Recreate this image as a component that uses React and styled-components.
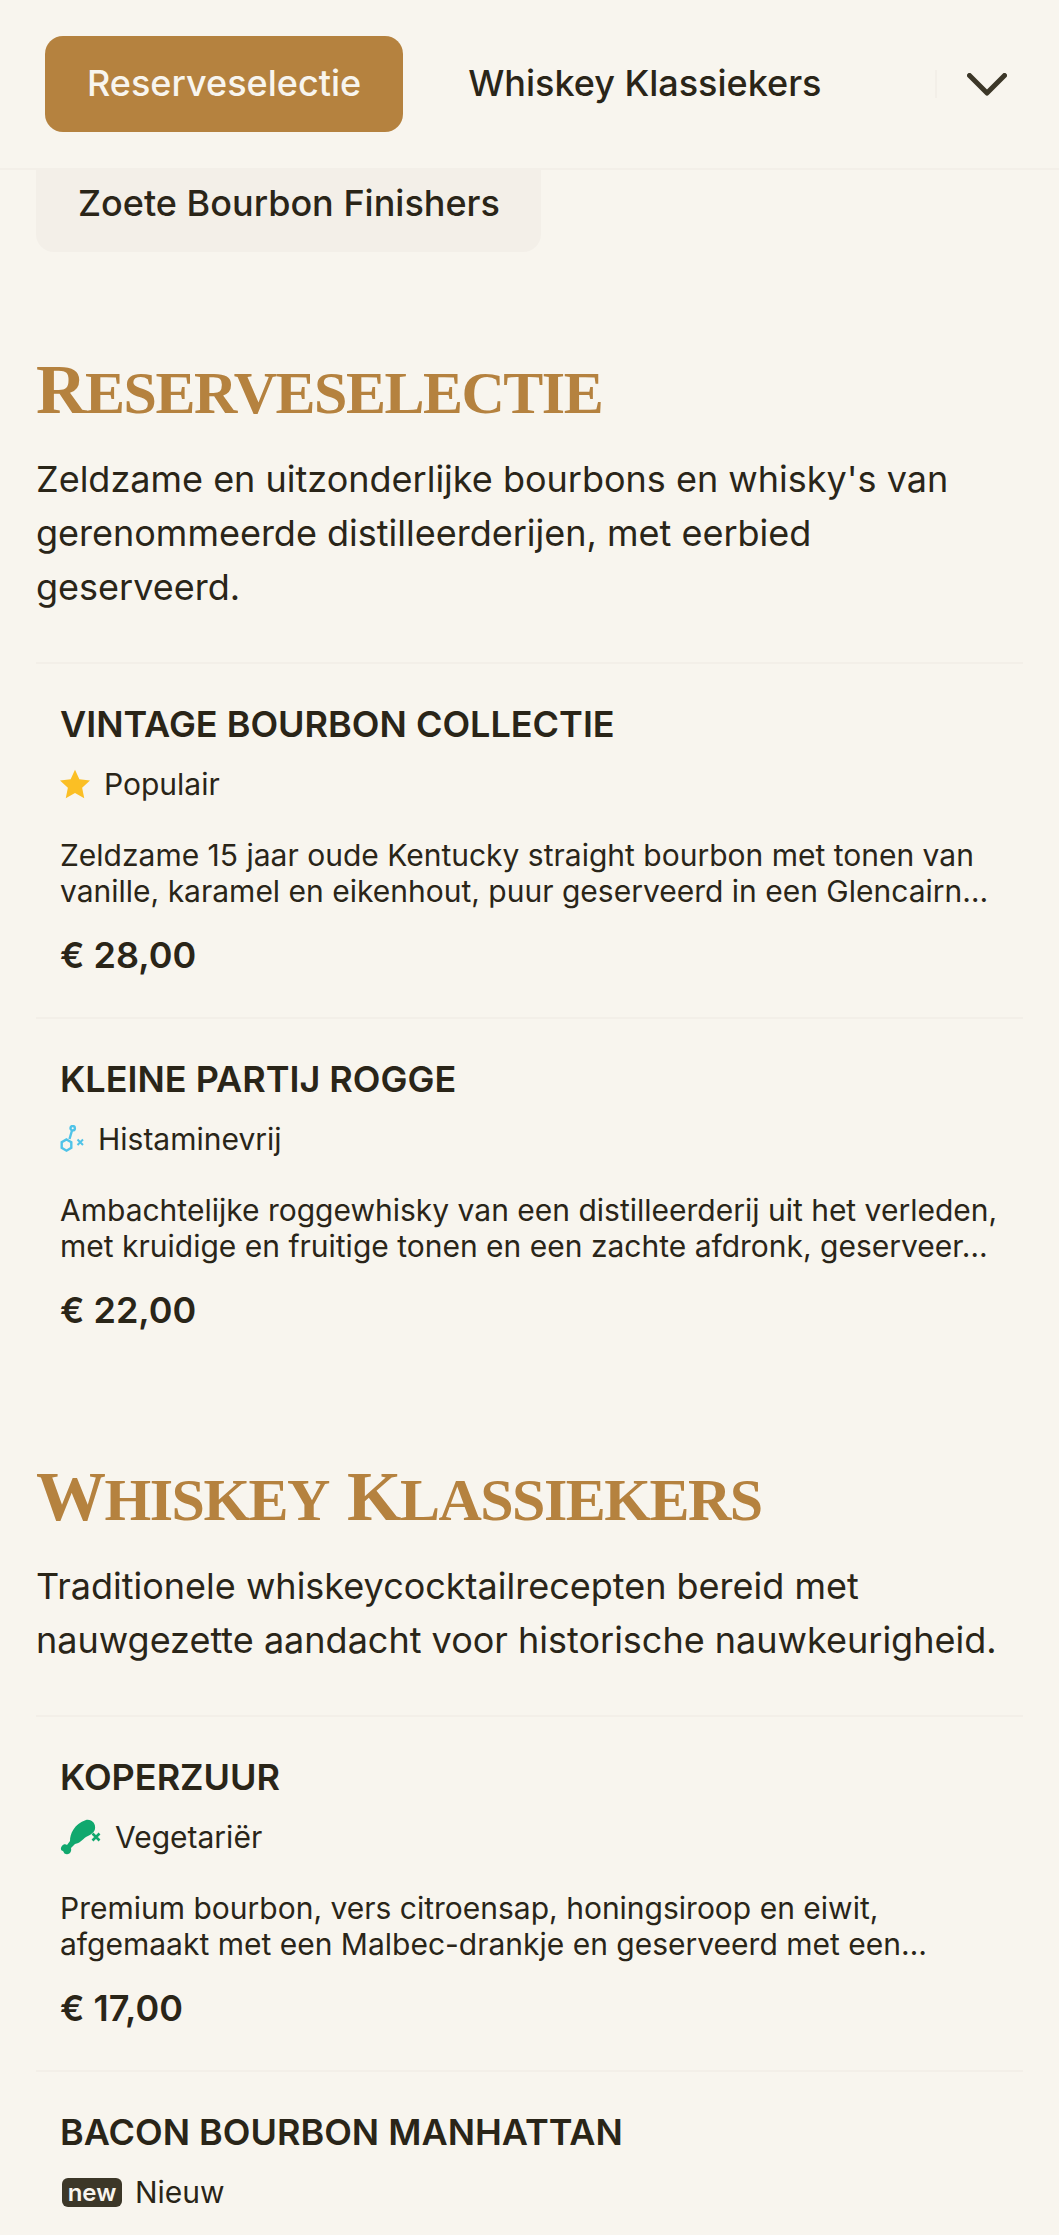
import React from 'react'
import styled, { createGlobalStyle } from 'styled-components'

const Global = createGlobalStyle`
  html, body { margin: 0; padding: 0; background: #f8f5ee; }
  body { font-family: Inter, "Liberation Sans", sans-serif; color: #2a2518; }
`

const Page = styled.div`
  width: 1059px;
  height: 2235px;
  overflow: hidden;
  background: #f8f5ee;
`

const Header = styled.header`
  height: 170px;
  box-sizing: border-box;
  display: flex;
  align-items: center;
  padding: 0 52px 0 45px;
  border-bottom: 2px solid #f3efe8;
`

const TabList = styled.nav`
  flex: 1;
  display: flex;
  gap: 23px;
  overflow: hidden;
`

const Tab = styled.div`
  flex: none;
  height: 96px;
  display: flex;
  align-items: center;
  padding: 0 42px 2px;
  box-sizing: border-box;
  border-radius: 18px;
  font-size: 36px;
  font-weight: 500;
  background: ${({ $active }) => ($active ? '#b5823f' : 'transparent')};
  color: ${({ $active }) => ($active ? '#f8f5ee' : '#2a2518')};
`

const Expand = styled.button`
  flex: none;
  width: 72px;
  height: 28px;
  padding: 0 0 0 30px;
  display: flex;
  align-items: center;
  background: none;
  border: 0;
  border-left: 2px solid #f3efe8;
  svg { display: block; }
`

const Overflowed = styled.div`
  display: inline-flex;
  align-items: center;
  box-sizing: border-box;
  height: 84px;
  margin: -2px 0 0 36px;
  padding: 0 41px 14px 42px;
  border-radius: 0 0 18px 18px;
  background: #f3efe8;
  font-size: 36px;
  font-weight: 500;
`

const Section = styled.section`
  padding: 0 36px;
  margin-top: ${({ $first }) => ($first ? '100px' : '87px')};
`

const Title = styled.h2`
  margin: 0;
  font-family: "Liberation Serif", serif;
  font-size: 60px;
  line-height: 76px;
  font-weight: 700;
  letter-spacing: -1.5px;
  text-transform: uppercase;
  color: #b5823f;
  display: flex;
  gap: 18px;
`

const TitleWord = styled.span`
  &::first-letter { font-size: 70px; }
`

const Intro = styled.p`
  margin: 21px 0 48px;
  font-size: 36px;
  line-height: 54px;
`

const Item = styled.article`
  padding: 36px 24px 38px;
  border-top: 2px solid #f3efe8;
`

const Name = styled.h3`
  margin: 0;
  font-size: 36px;
  line-height: 48px;
  font-weight: 600;
  text-transform: uppercase;
`

const Tag = styled.div`
  display: flex;
  align-items: center;
  gap: ${({ $gap }) => $gap}px;
  margin-top: 15px;
  height: 42px;
  font-size: 30px;
  svg { flex: none; display: block; }
`

const Desc = styled.p`
  margin: 32px 0 0;
  font-size: 30px;
  line-height: 36px;
`

const Price = styled.div`
  margin-top: 22px;
  font-size: 36px;
  line-height: 48px;
  font-weight: 600;
`

const NewBadge = styled.span`
  display: inline-flex;
  align-items: center;
  justify-content: center;
  width: 60px;
  height: 29px;
  margin-left: 2px;
  border-radius: 6px;
  background: #3c3728;
  color: #f8f5ee;
  font-size: 24px;
  font-weight: 600;
`

const Star = () => (
  <svg width="30" height="30" viewBox="0 0 24 24" fill="#fbbf24">
    <path d="M12 0.5l3.5 7.7 8.5 1-6.3 5.7 1.7 8.4L12 19.1l-7.4 4.2 1.7-8.4L0 9.2l8.5-1z" />
  </svg>
)

const Histamine = () => (
  <svg width="26" height="28" viewBox="0 0 26 28" fill="none" stroke="#4fc3e8" strokeWidth="2.4">
    <circle cx="12.7" cy="3.2" r="2.2" />
    <path d="M12 5.5L9.5 14" />
    <path d="M6.5 14.5l4.8 2.8v5.6l-4.8 2.8-4.8-2.8v-5.6z" />
    <path d="M17.5 14.5l5.5 5.5M23 14.5L17.5 20" strokeWidth="2" />
  </svg>
)

const Drumstick = () => (
  <svg width="42" height="37" viewBox="0 0 42 37" fill="#10a86e">
    <path d="M26 1C32 0 36 5 35 10C34 14 30 16 26 18C22 21 20 24 15 25L11 29C12 33 9 36 6 35C4 35 4 33 3 32C1 32 0 29 2 27C3 25 6 25 7 26L10 22C10 15 14 5 26 1Z" />
    <path d="M32.5 14.5l7 7M39.5 14.5l-7 7" fill="none" stroke="#10a86e" strokeWidth="2.6" />
  </svg>
)

const sections = [
  {
    title: ['Reserveselectie'],
    intro: "Zeldzame en uitzonderlijke bourbons en whisky's van gerenommeerde distilleerderijen, met eerbied geserveerd.",
    items: [
      {
        name: 'Vintage Bourbon Collectie',
        tag: <Tag $gap={14}><Star />Populair</Tag>,
        desc: 'Zeldzame 15 jaar oude Kentucky straight bourbon met tonen van vanille, karamel en eikenhout, puur geserveerd in een Glencairn…',
        price: '€ 28,00',
      },
      {
        name: 'Kleine partij rogge',
        tag: <Tag $gap={12}><Histamine />Histaminevrij</Tag>,
        desc: 'Ambachtelijke roggewhisky van een distilleerderij uit het verleden, met kruidige en fruitige tonen en een zachte afdronk, geserveer…',
        price: '€ 22,00',
      },
    ],
  },
  {
    title: ['Whiskey', 'Klassiekers'],
    intro: 'Traditionele whiskeycocktailrecepten bereid met nauwgezette aandacht voor historische nauwkeurigheid.',
    items: [
      {
        name: 'Koperzuur',
        tag: <Tag $gap={13}><Drumstick />Vegetariër</Tag>,
        desc: 'Premium bourbon, vers citroensap, honingsiroop en eiwit, afgemaakt met een Malbec-drankje en geserveerd met een…',
        price: '€ 17,00',
      },
      {
        name: 'Bacon Bourbon Manhattan',
        tag: <Tag $gap={13}><NewBadge>new</NewBadge>Nieuw</Tag>,
      },
    ],
  },
]

export default function App() {
  return (
    <Page>
      <Global />
      <Header>
        <TabList>
          <Tab $active>Reserveselectie</Tab>
          <Tab>Whiskey Klassiekers</Tab>
        </TabList>
        <Expand aria-label="Meer">
          <svg width="40" height="23" viewBox="0 0 40 23" fill="none" stroke="#3c3728" strokeWidth="5" strokeLinecap="round" strokeLinejoin="round">
            <path d="M2.5 2.5L20 20L37.5 2.5" />
          </svg>
        </Expand>
      </Header>
      <Overflowed>Zoete Bourbon Finishers</Overflowed>
      {sections.map((section, i) => (
        <Section key={section.title[0]} $first={i === 0}>
          <Title>
            {section.title.map((word) => <TitleWord key={word}>{word}</TitleWord>)}
          </Title>
          <Intro>{section.intro}</Intro>
          {section.items.map((item) => (
            <Item key={item.name}>
              <Name>{item.name}</Name>
              {item.tag}
              {item.desc && <Desc>{item.desc}</Desc>}
              {item.price && <Price>{item.price}</Price>}
            </Item>
          ))}
        </Section>
      ))}
    </Page>
  )
}
